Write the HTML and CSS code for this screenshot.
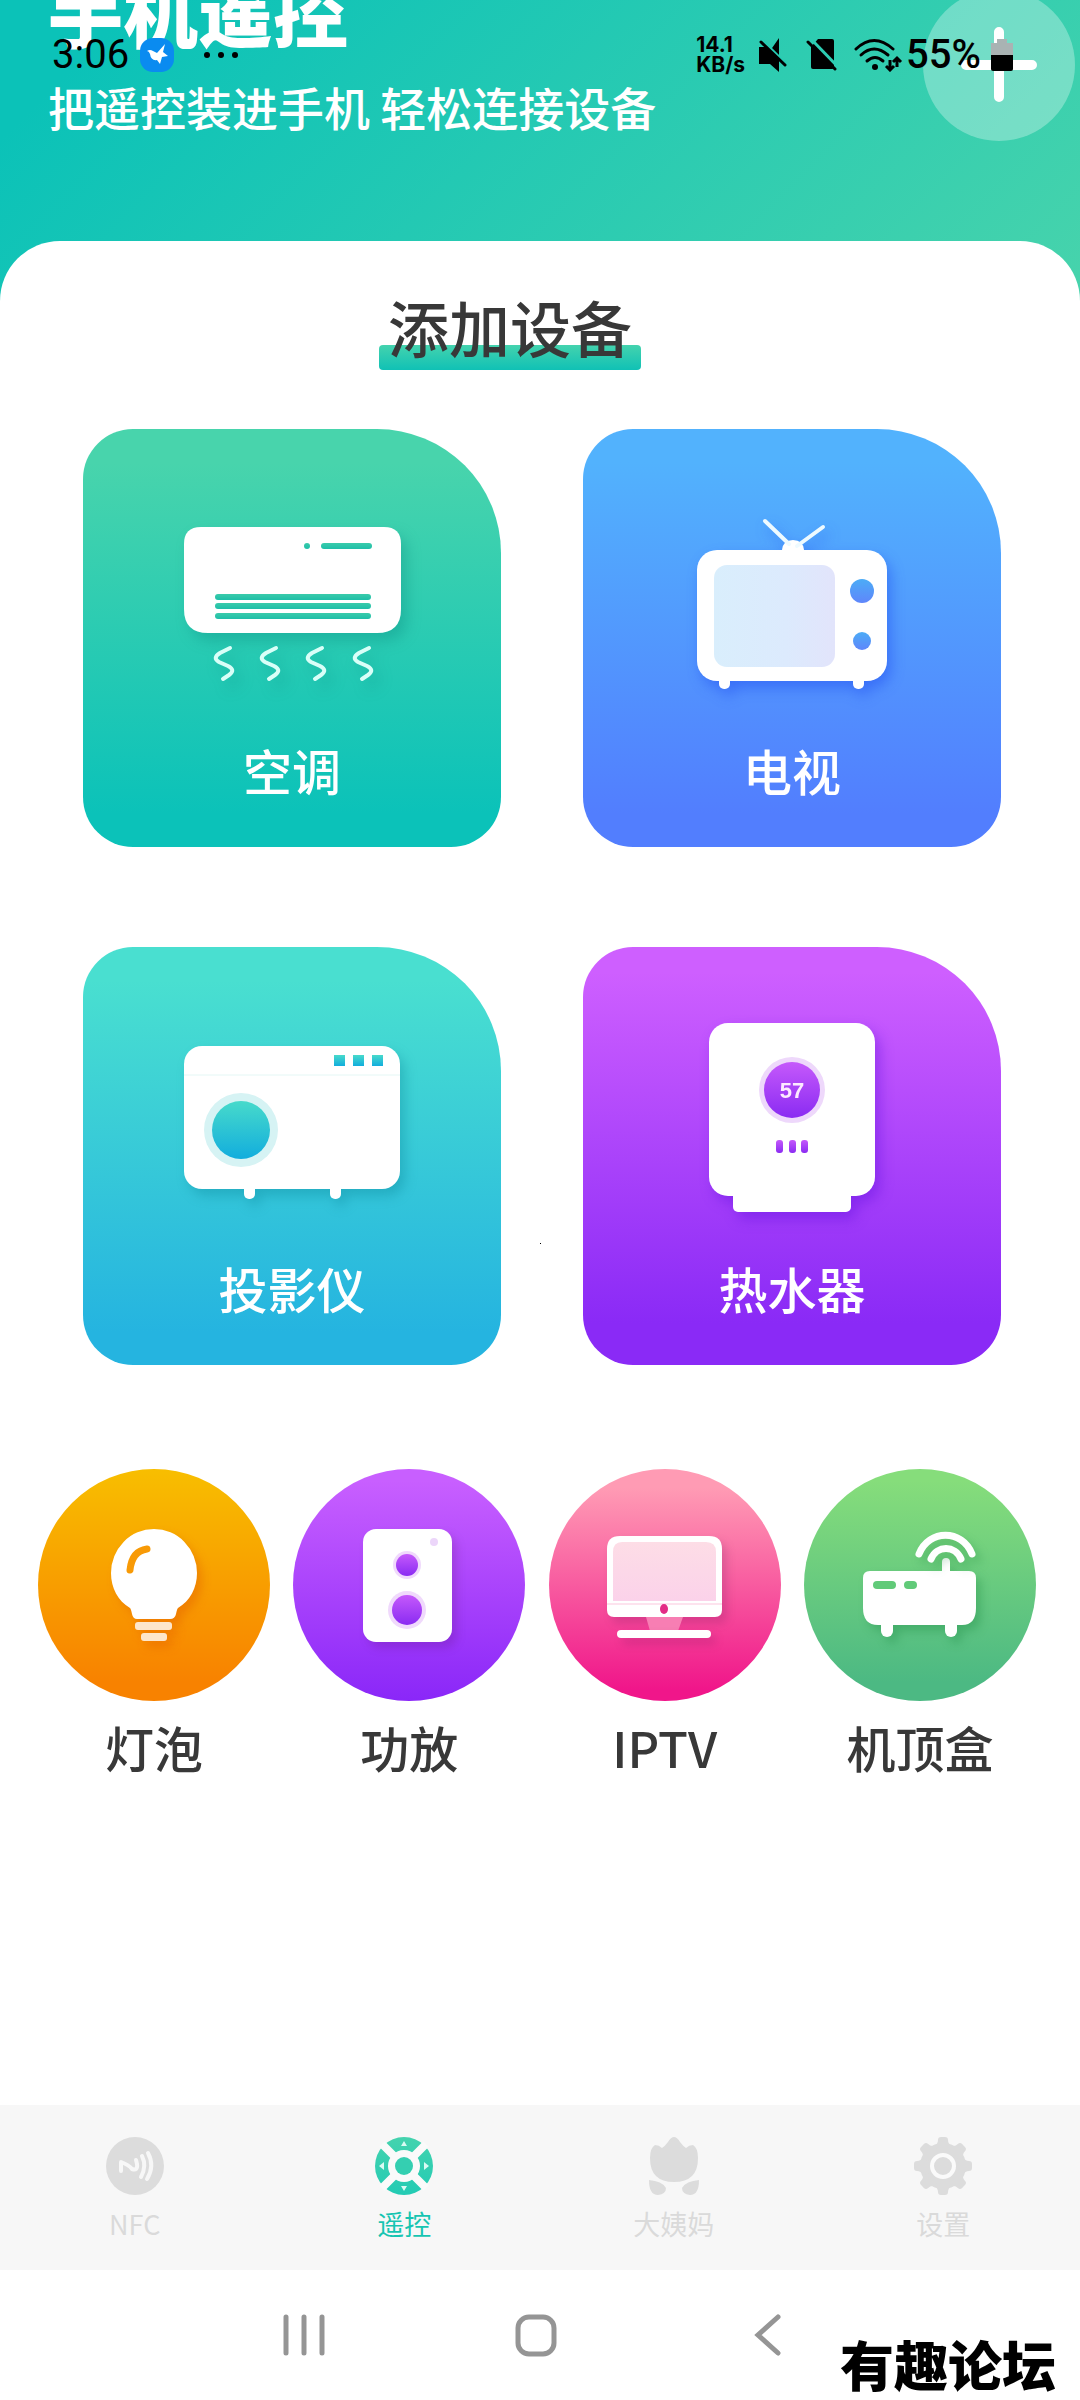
FILE: index.html
```html
<!DOCTYPE html>
<html lang="zh-CN">
<head>
<meta charset="utf-8">
<meta name="viewport" content="width=device-width, initial-scale=1">
<title>手机遥控</title>
<link rel="stylesheet" href="styles.css">
</head>
<body>
<div class="status">
  <div class="status-side">
    <span class="clock">3:06</span>
    <svg class="app-badge" width="34" height="34" viewBox="0 0 34 34" aria-hidden="true">
      <rect width="34" height="34" rx="13" fill="#0a8bf0"/>
      <path d="M7 13q3-2 6 0l4 2 8-9-2 8 5 4-6 1-2 7-3-4q-6 1-7-6-1-3-3-3z" fill="#fff"/>
    </svg>
    <svg class="more" width="34" height="8" viewBox="0 0 34 8" aria-hidden="true">
      <circle cx="3" cy="4" r="3"/><circle cx="17" cy="4" r="3"/><circle cx="31" cy="4" r="3"/>
    </svg>
  </div>
  <div class="status-side">
    <span class="speed"><span>14.1</span><span>KB/s</span></span>
    <svg class="mute" width="28" height="34" viewBox="0 0 28 34" aria-hidden="true">
      <path d="M0 9h6l5 4 9-13v34l-9-8H0z"/>
      <path d="M2 1l28 28" stroke="#27ccb4" stroke-width="3"/>
      <path d="M2 4l24 23" stroke="#000" stroke-width="3" stroke-linecap="round"/>
    </svg>
    <svg class="nosim" width="32" height="32" viewBox="0 0 32 32" aria-hidden="true">
      <path d="M12 0h14q2 0 2 2v26q0 2-2 2H7q-2 0-2-2V8z"/>
      <path d="M4-1l30 31" stroke="#2dcdb3" stroke-width="3"/>
      <path d="M2 3l27 27" stroke="#000" stroke-width="3" stroke-linecap="round"/>
    </svg>
    <svg class="wifi" width="49" height="34" viewBox="0 0 49 34" aria-hidden="true">
      <g fill="none" stroke="#000" stroke-width="3" stroke-linecap="round">
        <path d="M2 11q18-17 37 0"/><path d="M7 17q13-12 27 0"/><path d="M13 23q8-7 16 0"/>
      </g>
      <circle cx="21" cy="29" r="3"/>
      <path d="M36 22v9M32 28l4 4 4-4M43 29v-8M39 24l4-4 4 4" fill="none" stroke="#000" stroke-width="3"/>
    </svg>
    <span class="percent">55%</span>
    <svg class="battery" width="22" height="32" viewBox="0 0 22 32" aria-hidden="true">
      <path d="M6 0h10v4h6v12H0V4h6z" fill="#a9b3b3"/>
      <path d="M0 16h22v14q0 2-2 2H2q-2 0-2-2z"/>
    </svg>
  </div>
</div>

<header class="hero">
  <h1>手机遥控</h1>
  <p>把遥控装进手机 轻松连接设备</p>
  <button class="add" aria-label="添加">
    <svg viewBox="0 0 152 152" aria-hidden="true"><path d="M76 43v65M43 76h66" stroke="#fff" stroke-width="10" stroke-linecap="round"/></svg>
  </button>
</header>

<main class="sheet">
  <h2><span>添加设备</span></h2>

  <div class="cards">
    <button class="card card-air">
      <svg viewBox="0 0 418 305" aria-hidden="true">
        <defs><linearGradient id="air" x1="0" y1="0" x2="0" y2="1"><stop offset="0" stop-color="#3acbab"/><stop offset="1" stop-color="#1ebfa8"/></linearGradient></defs>
        <path d="M118 98h183q17 0 17 17v65q0 24-24 24H125q-24 0-24-24v-65q0-17 17-17z" fill="#fff"/>
        <g fill="url(#air)">
          <circle cx="224" cy="117" r="3"/>
          <rect x="238" y="114" width="51" height="6" rx="3"/>
          <rect x="132" y="165" width="156" height="6" rx="3"/>
          <rect x="132" y="174" width="156" height="6" rx="3"/>
          <rect x="132" y="184" width="156" height="6" rx="3"/>
        </g>
        <g fill="none" stroke="#d9fff8" stroke-width="4" stroke-linecap="round">
          <path d="M147 219l-10 5q-8 5-1 9l9 4q8 4 1 9l-6 4"/>
          <path d="M193 219l-10 5q-8 5-1 9l9 4q8 4 1 9l-6 4"/>
          <path d="M239 219l-10 5q-8 5-1 9l9 4q8 4 1 9l-6 4"/>
          <path d="M286 219l-10 5q-8 5-1 9l9 4q8 4 1 9l-6 4"/>
        </g>
      </svg>
      <span>空调</span>
    </button>

    <button class="card card-tv">
      <svg viewBox="0 0 418 305" aria-hidden="true">
        <defs>
          <linearGradient id="knob" x1="0" y1="0" x2="0" y2="1"><stop offset="0" stop-color="#4cacf6"/><stop offset="1" stop-color="#5f86fb"/></linearGradient>
          <linearGradient id="glass"><stop offset="0" stop-color="#d9eefc"/><stop offset=".6" stop-color="#dceafd"/><stop offset="1" stop-color="#e2e4fb"/></linearGradient>
        </defs>
        <g fill="#fff">
          <rect x="114" y="121" width="190" height="131" rx="20"/>
          <path d="M199 121q1-10 11-10t11 10z"/>
          <rect x="136" y="242" width="11" height="18" rx="5"/>
          <rect x="270" y="242" width="11" height="18" rx="5"/>
        </g>
        <path d="M182 92l24 23M240 98l-26 19" stroke="#eefaff" stroke-width="4" stroke-linecap="round"/>
        <rect x="131" y="136" width="121" height="102" rx="13" fill="url(#glass)"/>
        <circle cx="279" cy="162" r="12" fill="url(#knob)"/>
        <circle cx="279" cy="212" r="9" fill="url(#knob)"/>
      </svg>
      <span>电视</span>
    </button>

    <button class="card card-projector">
      <svg viewBox="0 0 418 305" aria-hidden="true">
        <defs><linearGradient id="lens" x1="0" y1="0" x2="0" y2="1"><stop offset="0" stop-color="#47dacb"/><stop offset="1" stop-color="#12addd"/></linearGradient></defs>
        <g fill="#fff">
          <rect x="101" y="99" width="216" height="143" rx="18"/>
          <rect x="161" y="230" width="11" height="22" rx="5"/>
          <rect x="247" y="230" width="11" height="22" rx="5"/>
        </g>
        <path d="M101 128h216" stroke="#e4f7f5"/>
        <g fill="url(#lens)">
          <rect x="251" y="108" width="11" height="11"/>
          <rect x="270" y="108" width="11" height="11"/>
          <rect x="289" y="108" width="11" height="11"/>
        </g>
        <circle cx="158" cy="183" r="37" fill="#d6f3f4"/>
        <circle cx="158" cy="183" r="29" fill="url(#lens)"/>
      </svg>
      <span>投影仪</span>
    </button>

    <button class="card card-heater">
      <svg viewBox="0 0 418 305" aria-hidden="true">
        <defs><linearGradient id="violet" x1="0" y1="0" x2="0" y2="1"><stop offset="0" stop-color="#c559fb"/><stop offset="1" stop-color="#8a2bf2"/></linearGradient></defs>
        <rect x="126" y="76" width="166" height="173" rx="19" fill="#fff"/>
        <rect x="150" y="225" width="118" height="40" rx="5" fill="#fff"/>
        <circle cx="209" cy="143" r="33" fill="#eed8fb"/>
        <circle cx="209" cy="143" r="28" fill="url(#violet)"/>
        <text class="degree" x="209" y="151" text-anchor="middle">57</text>
        <g fill="url(#violet)">
          <rect x="193" y="193" width="7" height="13" rx="3"/>
          <rect x="206" y="193" width="7" height="13" rx="3"/>
          <rect x="218" y="193" width="7" height="13" rx="3"/>
        </g>
      </svg>
      <span>热水器</span>
    </button>
  </div>

  <div class="rounds">
    <button class="round round-bulb">
      <svg viewBox="0 0 232 232" aria-hidden="true">
        <path class="solid" d="M92 139C80 132 73 119 73 104a43 44 0 0 1 86 0c0 15-7 28-19 35q-1 1-2 6t-6 5h-33q-4 0-5-5t-2-6z" fill="#fff"/>
        <path d="M92 101q2-19 17-21" fill="none" stroke="#f89a06" stroke-width="7" stroke-linecap="round"/>
        <rect class="solid" x="97" y="153" width="37" height="8" rx="3" fill="#fde6cb"/>
        <rect class="solid" x="103" y="164" width="26" height="8" rx="3" fill="#fde6cb"/>
      </svg>
      <span>灯泡</span>
    </button>
    <button class="round round-amp">
      <svg viewBox="0 0 232 232" aria-hidden="true">
        <rect class="solid" x="70" y="60" width="89" height="113" rx="13" fill="#fff"/>
        <circle cx="141" cy="73" r="4" fill="#ecd6fa"/>
        <circle cx="114" cy="96" r="14" fill="#f0d9fc"/>
        <circle cx="114" cy="96" r="11" fill="url(#violet)"/>
        <circle cx="114" cy="141" r="19" fill="#f0d9fc"/>
        <circle cx="114" cy="141" r="15" fill="url(#violet)"/>
      </svg>
      <span>功放</span>
    </button>
    <button class="round round-iptv">
      <svg viewBox="0 0 232 232" aria-hidden="true">
        <defs><linearGradient id="pane" x1="0" y1="0" x2="0" y2="1"><stop offset="0" stop-color="#fddde6"/><stop offset="1" stop-color="#fbd2ea"/></linearGradient></defs>
        <path class="solid" d="M71 67h89q13 0 13 13v61q0 7-7 7H65q-7 0-7-7V80q0-13 13-13z" fill="#fff"/>
        <path d="M97 148h37l-5 14h-28z" fill="#f77eb3"/>
        <path d="M73 73h84q10 0 10 10v49H64V83q0-10 9-10z" fill="url(#pane)"/>
        <path d="M58 135h115" stroke="#fde3ee" stroke-width="2"/>
        <ellipse cx="115" cy="140" rx="4" ry="5" fill="#e32c86"/>
        <rect class="solid" x="68" y="161" width="94" height="8" rx="4" fill="#fff"/>
      </svg>
      <span>IPTV</span>
    </button>
    <button class="round round-box">
      <svg viewBox="0 0 232 232" aria-hidden="true">
        <g class="solid" fill="#fff">
          <path d="M66 102h99q7 0 7 7v30q0 17-14 17H74q-15 0-15-17v-30q0-7 7-7z"/>
          <rect x="77" y="146" width="12" height="22" rx="6"/>
          <rect x="141" y="146" width="12" height="22" rx="6"/>
          <rect x="138" y="89" width="8" height="24" rx="4"/>
        </g>
        <g class="solid" fill="none" stroke="#fff" stroke-width="7" stroke-linecap="round">
          <path d="M127 90c6-14 24-14 30 0"/><path d="M115 85c10-25 43-25 53 0"/>
        </g>
        <rect x="69" y="112" width="23" height="8" rx="4" fill="#61ca79"/>
        <rect x="100" y="112" width="13" height="8" rx="4" fill="#61ca79"/>
      </svg>
      <span>机顶盒</span>
    </button>
  </div>
</main>

<nav class="tabs">
  <a href="#nfc">
    <svg width="58" height="58" viewBox="0 0 58 58" aria-hidden="true">
      <circle cx="29" cy="29" r="29" fill="#dcdcdc"/>
      <path d="M15 34v-9q8 3 11 7 6 2 5-5l-1-4M36 19q5 10-1 21M42 16q7 13-1 26" fill="none" stroke="#f7f7f7" stroke-width="4" stroke-linecap="round" stroke-linejoin="round"/>
    </svg>
    <span>NFC</span>
  </a>
  <a href="#remote" class="current" aria-current="page">
    <svg width="58" height="58" viewBox="0 0 58 58" aria-hidden="true">
      <defs><linearGradient id="pad" x1="0" y1="0" x2="0" y2="1"><stop offset="0" stop-color="#44d3ae"/><stop offset="1" stop-color="#23cbb4"/></linearGradient></defs>
      <circle cx="29" cy="29" r="29" fill="url(#pad)"/>
      <circle cx="29" cy="29" r="16" fill="#fafafa"/>
      <path d="M7 7l44 44M51 7L7 51" stroke="#fafafa" stroke-width="8"/>
      <circle cx="29" cy="29" r="9" fill="#34cfb1"/>
      <path d="M29 4l3 5h-6zM29 54l3-5h-6zM4 29l5-4v8zM54 29l-5-4v8z" fill="#d9fbf3"/>
    </svg>
    <span>遥控</span>
  </a>
  <a href="#cycle">
    <svg width="58" height="58" viewBox="0 0 58 58" aria-hidden="true">
      <path d="M29 0q3 0 6 5 3 4 6 6 3-3 7-3 5 3 5 13 0 24-24 24T5 21Q5 11 10 8q4 0 7 3 3-2 6-6 3-5 6-5zM4 43q0 15 9 15 8-1 8-7-4-7-17-8zM54 43q0 15-9 15-8-1-8-7 4-7 17-8z" fill="#dcdcdc"/>
    </svg>
    <span>大姨妈</span>
  </a>
  <a href="#settings">
    <svg width="58" height="58" viewBox="0 0 58 58" aria-hidden="true">
      <g fill="#dcdcdc">
        <circle cx="29" cy="29" r="23"/>
        <path id="tooth" d="M20 9q4-2 4-6 0-3 3-3h4q3 0 3 3 0 4 4 6l-2 6H22zM20 49q4 2 4 6 0 3 3 3h4q3 0 3-3 0-4 4-6l-2-6H22z"/>
        <use href="#tooth" transform="rotate(45 29 29)"/>
        <use href="#tooth" transform="rotate(90 29 29)"/>
        <use href="#tooth" transform="rotate(135 29 29)"/>
      </g>
      <circle cx="29" cy="29" r="11" fill="none" stroke="#fafafa" stroke-width="4"/>
    </svg>
    <span>设置</span>
  </a>
</nav>

<footer class="system">
  <button aria-label="最近任务"><svg width="48" height="48" viewBox="0 0 48 48"><path d="M6 6v36M24 6v36M42 6v36"/></svg></button>
  <button aria-label="主页"><svg width="48" height="48" viewBox="0 0 48 48"><rect x="6" y="6" width="36" height="37" rx="11"/></svg></button>
  <button aria-label="返回"><svg width="48" height="48" viewBox="0 0 48 48"><path d="M34 6L14 24l20 18"/></svg></button>
  <span class="forum">有趣论坛</span>
</footer>
</body>
</html>
```
FILE: styles.css
```css
* { box-sizing: border-box; }

body {
  margin: 0;
  min-height: 100vh;
  display: flex;
  flex-direction: column;
  position: relative;
  overflow-x: hidden;
  background: #fff;
  color: #383838;
  font-family: "Noto Sans CJK SC", "Noto Sans", sans-serif;
}

button {
  border: 0;
  padding: 0;
  background: none;
  color: inherit;
  font: inherit;
  cursor: pointer;
}

svg { display: block; }

/* System status bar, laid over the header */
.status {
  position: absolute;
  z-index: 2;
  top: 0;
  left: 0;
  right: 0;
  height: 110px;
  padding: 0 67px 0 52px;
  display: flex;
  justify-content: space-between;
  align-items: center;
  color: #000;
  font-family: Roboto, sans-serif;
}
.status-side { display: flex; align-items: center; }
.clock { font-size: 40px; line-height: 48px; }
.app-badge { margin-left: 11px; }
.more { margin-left: 30px; }
.speed {
  display: flex;
  flex-direction: column;
  font-size: 21px;
  line-height: 20px;
  font-weight: 700;
  font-family: Inter, sans-serif;
}
.mute { margin-left: 14px; }
.nosim { margin-left: 19px; }
.wifi { margin-left: 16px; }
.percent { margin-left: 3px; font-size: 40px; line-height: 48px; font-weight: 500; }
.battery { margin-left: 10px; }

/* Header */
.hero {
  position: relative;
  padding: 0 48px 165px;
  background: linear-gradient(135deg, #0bc2b8 10%, #46d3ac 98%);
  color: #fff;
}
.hero h1 {
  margin: -30px 0 26px;
  font-size: 75px;
  line-height: 80px;
  font-weight: 900;
}
.hero p {
  margin: 0;
  font-size: 46px;
  line-height: 60px;
  font-weight: 500;
}
.add {
  position: absolute;
  top: -11px;
  right: 5px;
  width: 152px;
  border-radius: 50%;
  background: rgba(255, 255, 255, .3);
}

/* Device picker */
.sheet {
  position: relative;
  flex: 1;
  margin-top: -60px;
  padding: 41px 0 40px;
  border-radius: 60px 60px 0 0;
  background: #fff;
}
.sheet h2 {
  margin: 0;
  padding-right: 60px;
  text-align: center;
  font-size: 61px;
  line-height: 90px;
  font-weight: 500;
}
.sheet h2 span {
  display: inline-block;
  position: relative;
  z-index: 0;
  padding: 0 9px;
}
.sheet h2 span::before {
  content: "";
  position: absolute;
  z-index: -1;
  left: 0;
  right: 0;
  bottom: 2px;
  height: 25px;
  border-radius: 4px;
  background: linear-gradient(#44d3ae, #10c1b5);
}

.cards {
  position: relative;
  display: grid;
  grid-template-columns: 1fr 1fr;
  gap: 100px 82px;
  margin-top: 57px;
  padding: 0 79px 0 83px;
}
.cards::after {
  content: "";
  position: absolute;
  left: 50%;
  top: 87%;
  width: 1px;
  height: 1px;
  background: #000;
}
.card {
  padding-bottom: 41px;
  border-radius: 50px 124px 50px 50px;
  color: #fff;
  font-size: 49px;
  line-height: 72px;
  font-weight: 500;
}
.card svg { width: 100%; }
.card span { display: block; }
.card-air { background: linear-gradient(#48d4ac 8%, #0bc2b9 92%); }
.card-tv { background: linear-gradient(#52b2fd 8%, #527efe 92%); }
.card-projector { background: linear-gradient(#49dfd0 8%, #25b4e0 92%); }
.card-heater { background: linear-gradient(#ce5fff 6%, #8a2af6 90%); }
.card-air svg { filter: drop-shadow(6px 8px 7px rgba(0, 120, 110, .28)); }
.card-tv svg { filter: drop-shadow(4px 7px 7px rgba(20, 60, 240, .4)); }
.card-projector svg { filter: drop-shadow(5px 7px 6px rgba(0, 120, 140, .3)); }
.card-heater svg { filter: drop-shadow(5px 7px 7px rgba(90, 10, 220, .4)); }
.degree { font-family: "Liberation Sans", sans-serif; font-size: 22px; font-weight: 700; fill: #fdeaff; }

.rounds {
  display: flex;
  justify-content: space-between;
  gap: 16px;
  margin-top: 104px;
  padding: 0 44px 0 38px;
}
.round {
  flex: 0 1 232px;
  font-size: 49px;
  line-height: 72px;
  font-weight: 500;
}
.round svg { width: 100%; border-radius: 50%; }
.round span { display: block; margin-top: 10px; }
.round-bulb svg { background: linear-gradient(#f8be00, #f88200 92%); }
.round-amp svg { background: linear-gradient(#c85fff 5%, #8a27f8); }
.round-iptv svg { background: linear-gradient(#ff9bb4 8%, #f0168a 95%); }
.round-box svg { background: linear-gradient(#86dd7b 5%, #4cb983 92%); }
.round .solid { filter: drop-shadow(5px 6px 5px rgba(60, 0, 60, .16)); }
.round-bulb .solid { filter: drop-shadow(5px 6px 5px rgba(220, 70, 0, .3)); }
.round-box .solid { filter: drop-shadow(5px 6px 5px rgba(0, 110, 40, .25)); }

/* Bottom tabs */
.tabs {
  display: grid;
  grid-template-columns: repeat(4, 1fr);
  padding: 32px 2px 26px 0;
  background: #f7f7f7;
}
.tabs a {
  display: flex;
  flex-direction: column;
  align-items: center;
  gap: 9px;
  color: #dadada;
  font-size: 27px;
  line-height: 40px;
  text-decoration: none;
}
.tabs .current { color: #17c5b2; }

/* System navigation */
.system {
  position: relative;
  display: flex;
  justify-content: center;
  align-items: center;
  gap: 184px;
  height: 130px;
  padding-right: 8px;
}
.system svg {
  fill: none;
  stroke: #959595;
  stroke-width: 5;
  stroke-linecap: round;
}
.forum {
  position: absolute;
  right: 24px;
  bottom: 4px;
  color: #000;
  font-size: 54px;
  line-height: 64px;
  font-weight: 900;
}
```
